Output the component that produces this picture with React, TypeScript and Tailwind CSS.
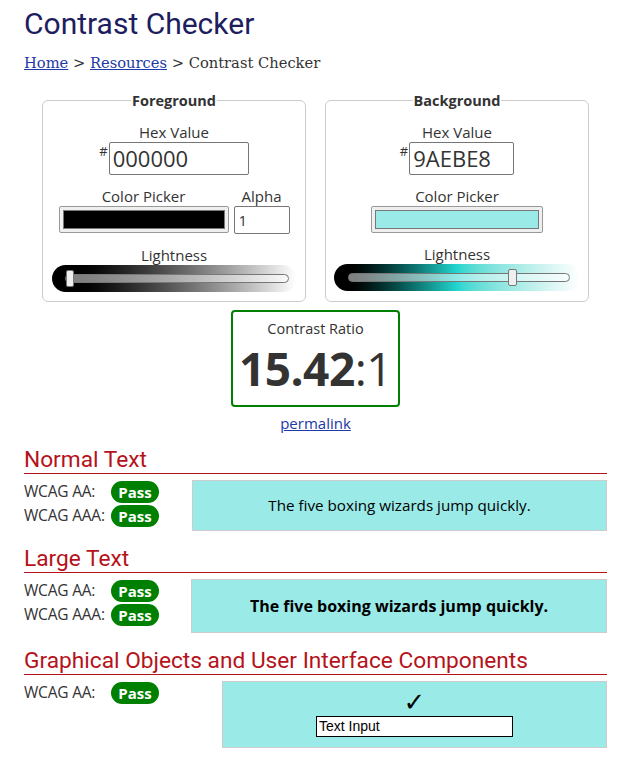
import React from 'react';

const Badge = () => (
  <span className="inline-flex h-[22px] w-[48px] items-center justify-center rounded-full bg-[#008000] text-[15px] font-bold leading-none text-white">
    Pass
  </span>
);

const ResultRow = ({ label }: { label: string }) => (
  <div className="flex h-[24px] items-center">
    <span className="w-[87px] text-[15.5px] tracking-[-0.2px] text-[#333]">{label}</span>
    <Badge />
  </div>
);

const SectionHeading = ({ children }: { children: React.ReactNode }) => (
  <h2 className="mb-[6px] border-b border-[#b5121b] font-['Roboto',sans-serif] text-[22.7px] leading-[26px] text-[#b5121b]">
    {children}
  </h2>
);

const Lightness = ({ gradient, padL, padR, thumb }: { gradient: string; padL: string; padR: string; thumb: string }) => (
  <div className={`flex h-[27px] items-center rounded-full ${gradient} ${padL} ${padR}`}>
    <div className="relative h-[9px] flex-1 rounded-full border border-[#777] bg-white/50">
      <div className={`absolute top-[-5px] h-[17px] w-[8px] rounded-[2px] border border-[#777] bg-[#efefef] ${thumb}`} />
    </div>
  </div>
);

const Swatch = ({ color, width }: { color: string; width: string }) => (
  <div className={`h-[27px] rounded-[2px] border border-[#999] bg-[#efefef] p-[3px] ${width}`}>
    <div className={`h-full w-full border border-[#777] ${color}`} />
  </div>
);

export default function App() {
  return (
    <div className="min-h-screen bg-white pl-6 pr-3 pt-[5px] font-['Open_Sans',sans-serif] text-[#333]">
      <h1 className="font-['Roboto',sans-serif] text-[30px] leading-[38px] text-[#1d1d5f]">Contrast Checker</h1>
      <nav className="mt-[11px] font-['DejaVu_Serif',serif] text-[14.7px] leading-[18px] text-[#333]">
        <a href="#" className="text-[#2039a6] underline">Home</a> &gt;{' '}
        <a href="#" className="text-[#2039a6] underline">Resources</a> &gt; Contrast Checker
      </nav>

      {/* Colour pickers */}
      <div className="mt-[19px] flex justify-center gap-[19px]">
        <fieldset className="w-[264px] rounded-[6px] border border-[#ccc] px-[9px] pb-[9px]">
          <legend className="mx-auto px-[1px] text-[14.5px] font-bold leading-[19px]">Foreground</legend>
          <div className="mt-[12px] text-center text-[15px] leading-[20px]">Hex Value</div>
          <div className="flex justify-center">
            <span className="mr-[1px] text-[13px] leading-[18px]">#</span>
            <input
              readOnly
              value="000000"
              className="h-[33px] w-[140px] rounded-[2px] border border-[#767676] px-[3px] text-[22px] text-[#333] outline-none"
            />
          </div>
          <div className="mt-[11px] flex justify-center gap-[5px]">
            <div className="flex flex-col items-center">
              <span className="text-[15px] leading-[20px]">Color Picker</span>
              <Swatch color="bg-black" width="w-[170px]" />
            </div>
            <div className="flex flex-col items-center">
              <span className="text-[15px] leading-[20px]">Alpha</span>
              <input
                readOnly
                value="1"
                className="h-[28px] w-[56px] rounded-[2px] border border-[#767676] px-[4px] text-[15px] text-[#333] outline-none"
              />
            </div>
          </div>
          <div className="mt-[11px] text-center text-[15px] leading-[20px]">Lightness</div>
          <Lightness
            gradient="bg-linear-to-r from-black from-5% to-white"
            padL="pl-[13px]"
            padR="pr-[7px]"
            thumb="left-[0px]"
          />
        </fieldset>

        <fieldset className="w-[264px] rounded-[6px] border border-[#ccc] px-[9px] pb-[9px]">
          <legend className="mx-auto px-[1px] text-[14.5px] font-bold leading-[19px]">Background</legend>
          <div className="mt-[12px] text-center text-[15px] leading-[20px]">Hex Value</div>
          <div className="flex justify-center">
            <span className="mr-[1px] text-[13px] leading-[18px]">#</span>
            <input
              readOnly
              value="9AEBE8"
              className="h-[33px] w-[105px] rounded-[2px] border border-[#767676] px-[3px] text-[22px] text-[#333] outline-none"
            />
          </div>
          <div className="mt-[11px] flex flex-col items-center">
            <span className="text-[15px] leading-[20px]">Color Picker</span>
            <Swatch color="bg-[#9aebe8]" width="w-[172px]" />
          </div>
          <div className="mt-[11px] text-center text-[15px] leading-[20px]">Lightness</div>
          <div className="-mx-[1px]">
            <Lightness
              gradient="bg-linear-to-r from-black from-3% via-[#22d6cf] to-white"
              padL="pl-[14px]"
              padR="pr-[10px]"
              thumb="left-[159px] w-[9px]"
            />
          </div>
        </fieldset>
      </div>

      {/* Ratio */}
      <div className="mt-[8px] flex flex-col items-center">
        <div className="flex h-[97px] w-[169px] flex-col items-center rounded-[4px] border-2 border-[#008000]">
          <span className="mt-[7px] text-[14.5px] leading-[20px]">Contrast Ratio</span>
          <span className="mt-[3px] text-[46px] leading-[52px] tracking-[-0.5px] text-[#333]">
            <b>15.42</b>:1
          </span>
        </div>
        <a href="#" className="mt-[5px] text-[15px] leading-[22px] text-[#2039a6] underline">permalink</a>
      </div>

      {/* Normal text */}
      <section className="mt-[13px]">
        <SectionHeading>Normal Text</SectionHeading>
        <div className="flex">
          <div className="w-[168px]">
            <ResultRow label="WCAG AA:" />
            <ResultRow label="WCAG AAA:" />
          </div>
          <div className="flex h-[51px] flex-1 items-center justify-center border border-[#ccc] bg-[#9aebe8] text-[15.2px] text-black">
            The five boxing wizards jump quickly.
          </div>
        </div>
      </section>

      {/* Large text */}
      <section className="mt-[15px]">
        <SectionHeading>Large Text</SectionHeading>
        <div className="flex">
          <div className="w-[167px]">
            <ResultRow label="WCAG AA:" />
            <ResultRow label="WCAG AAA:" />
          </div>
          <div className="flex h-[54px] flex-1 items-center justify-center border border-[#ccc] bg-[#9aebe8] text-[16px] font-bold text-black">
            The five boxing wizards jump quickly.
          </div>
        </div>
      </section>

      {/* UI components */}
      <section className="mt-[15px]">
        <SectionHeading>Graphical Objects and User Interface Components</SectionHeading>
        <div className="flex">
          <div className="w-[198px]">
            <ResultRow label="WCAG AA:" />
          </div>
          <div className="flex h-[67px] flex-1 flex-col items-center border border-[#ccc] bg-[#9aebe8] text-black">
            <span className="mt-[6px] font-['DejaVu_Sans',sans-serif] text-[26px] font-bold leading-[28px]">✓</span>
            <input
              readOnly
              value="Text Input"
              className="h-[21px] w-[197px] border border-black bg-white px-[2px] font-['Liberation_Sans',sans-serif] text-[14px] text-black outline-none"
            />
          </div>
        </div>
      </section>
    </div>
  );
}
